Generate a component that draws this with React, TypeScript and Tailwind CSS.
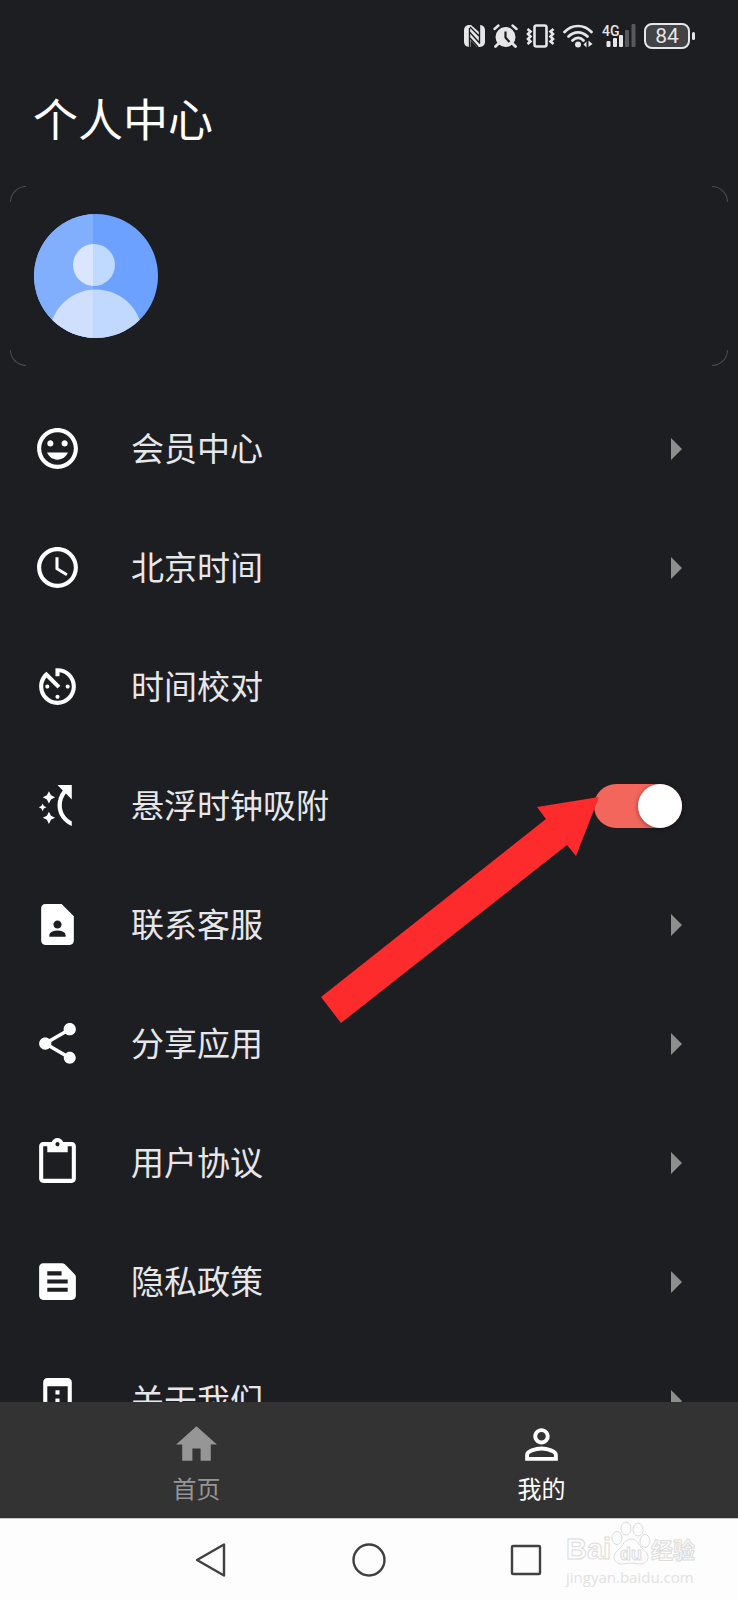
import React, { useState } from "react";
import type { IconType } from "react-icons";
import {
  MdAccessTime,
  MdAvTimer,
  MdContactPage,
  MdContentPaste,
  MdHome,
  MdInsertEmoticon,
  MdPermDeviceInformation,
  MdPersonOutline,
  MdShare,
  MdTextSnippet,
} from "react-icons/md";

const SnapIcon = ({ className }: { className?: string }) => (
  <svg viewBox="0 0 24 24" fill="currentColor" className={className}>
    <path d="M19 9V2h-7l2.600 2.600C12.900 6.700 12 9.200 12 12c0 4.500 2.800 8.300 7 10v-2.200c-3-1.600-4.900-4.500-4.900-7.800 0-2.300.7-4.200 2-5.900z" />
    <path d="M7.800 5l1 2 2 1-2 1-1 2-1-2-2-1 2-1z" />
    <path d="M7.800 15l1 2 2 1-2 1-1 2-1-2-2-1 2-1z" />
    <path d="M4.700 11l.6 1.300 1.300.6-1.300.6-.6 1.300-.6-1.300-1.300-.6 1.300-.6z" />
  </svg>
);

type MenuItem = {
  label: string;
  icon: IconType | typeof SnapIcon;
  trailing: "arrow" | "switch" | "none";
};

const menu: MenuItem[] = [
  { label: "会员中心", icon: MdInsertEmoticon, trailing: "arrow" },
  { label: "北京时间", icon: MdAccessTime, trailing: "arrow" },
  { label: "时间校对", icon: MdAvTimer, trailing: "none" },
  { label: "悬浮时钟吸附", icon: SnapIcon, trailing: "switch" },
  { label: "联系客服", icon: MdContactPage, trailing: "arrow" },
  { label: "分享应用", icon: MdShare, trailing: "arrow" },
  { label: "用户协议", icon: MdContentPaste, trailing: "arrow" },
  { label: "隐私政策", icon: MdTextSnippet, trailing: "arrow" },
  { label: "关于我们", icon: MdPermDeviceInformation, trailing: "arrow" },
];

const StatusBar = () => (
  <div className="flex h-[72px] shrink-0 items-center justify-end gap-2 pr-[43px] text-[#e6e6e8]">
    {/* NFC */}
    <svg viewBox="0 0 21 22" className="h-[22px] w-[21px]">
      <rect width="21" height="22" rx="5" fill="currentColor" />
      <path
        d="M5.500 3v19M15.500 0v18M6 2l9 9M6 7.500l10 11M6 13l8 9"
        stroke="#1d1e22"
        strokeWidth="1.400"
        fill="none"
      />
      <path d="M7 0h8v7z" fill="#1d1e22" />
      <path d="M6.500 15v7H13z" fill="#1d1e22" />
    </svg>
    {/* alarm */}
    <svg viewBox="0 0 25 24" className="h-6 w-[25px]" fill="none" stroke="currentColor">
      <circle cx="12.500" cy="13" r="10" fill="currentColor" stroke="none" />
      <path d="M1.500 5l4-3.500M23.500 5l-4-3.500" strokeWidth="2.400" strokeLinecap="round" />
      <path d="M5.500 19.500l-3 3M19.500 19.500l3 3" strokeWidth="2.800" strokeLinecap="round" />
      <path d="M12.500 7.500v6l4 4.500" stroke="#1d1e22" strokeWidth="2.200" />
    </svg>
    {/* vibrate */}
    <svg viewBox="0 0 29 24" className="h-6 w-[29px]" fill="none" stroke="currentColor">
      <rect x="8.500" y="1.500" width="12" height="21" rx="2" strokeWidth="2.600" />
      <path
        d="M1.500 5l3 2.500L2 10l2.500 2.500L2 15l2.500 2.500L1.500 20"
        strokeWidth="2.600"
      />
      <path
        d="M27.500 5l-3 2.500L27 10l-2.500 2.500L27 15l-2.500 2.500 3 2.500"
        strokeWidth="2.600"
      />
    </svg>
    {/* wifi */}
    <svg viewBox="0 0 30 24" className="h-6 w-[30px]" fill="none" stroke="currentColor">
      <path
        d="M1.500 8c7.500-8 19.500-8 27 0M5.500 12.500c5.500-5.600 13.500-5.600 19 0M9.500 16.500c3.500-3.500 8-3.500 11 0"
        strokeWidth="2.700"
        strokeLinecap="round"
      />
      <circle cx="15" cy="20.500" r="3" fill="currentColor" stroke="none" />
      <path d="M20.500 20.500l3-3v6zM29.500 20l-4-3.500v6.500z" fill="currentColor" stroke="none" />
    </svg>
    {/* signal */}
    <svg viewBox="0 0 34 24" className="ml-px h-6 w-[34px]" fill="currentColor">
      <text x="0" y="12" fontSize="14" fontWeight="500" fontFamily="Roboto, sans-serif">
        4G
      </text>
      <rect x="4.500" y="17" width="4" height="6" rx="1" />
      <rect x="11" y="14" width="4" height="9" rx="1" />
      <rect x="17" y="11" width="4" height="12" rx="1" />
      <rect x="23" y="6" width="4" height="17" rx="1" opacity=".3" />
      <rect x="29.500" y="0" width="4" height="23" rx="1" opacity=".3" />
    </svg>
    <div className="flex items-center gap-[2px]">
      <div className="flex h-[26px] w-[46px] items-center justify-center rounded-lg border-2 border-current bg-[#424347] font-['Roboto',sans-serif] text-[21px] leading-none">
        84
      </div>
      <span className="h-2 w-[3px] rounded-full bg-current" />
    </div>
  </div>
);

const Avatar = () => (
  <svg viewBox="0 0 124 124" className="size-[124px]">
    <defs>
      <clipPath id="disc">
        <circle cx="62" cy="62" r="62" />
      </clipPath>
      <clipPath id="left">
        <path d="M0 0h59v124H0z" />
      </clipPath>
    </defs>
    <g clipPath="url(#disc)">
      <path d="M0 0h124v124H0z" fill="#6da1ff" />
      <circle cx="60" cy="51" r="21" fill="#bfd9ff" />
      <circle cx="62" cy="122" r="46.500" fill="#c1d8ff" />
      <g clipPath="url(#left)">
        <path d="M0 0h59v124H0z" fill="#82affd" />
        <circle cx="60" cy="51" r="21" fill="#dae6ff" />
        <circle cx="62" cy="122" r="46.500" fill="#d0dffe" />
      </g>
    </g>
  </svg>
);

const ProfileCard = () => (
  <section className="relative mx-[10px] shrink-0 px-6 py-7">
    <span className="absolute left-0 top-0 size-4 rounded-tl-2xl border-l border-t border-[#4b4d50]" />
    <span className="absolute right-0 top-0 size-4 rounded-tr-2xl border-r border-t border-[#4b4d50]" />
    <span className="absolute bottom-0 left-0 size-4 rounded-bl-2xl border-b border-l border-[#4b4d50]" />
    <span className="absolute bottom-0 right-0 size-4 rounded-br-2xl border-b border-r border-[#4b4d50]" />
    <Avatar />
  </section>
);

const rowClass =
  "relative flex h-[119px] w-full items-center gap-[49px] pl-[33px] pr-[56px] text-left text-[33px] text-[#e7e7eb]";

const MenuRow = ({ item }: { item: MenuItem }) => {
  const [on, setOn] = useState(true);
  const Icon = item.icon;

  if (item.trailing === "switch") {
    return (
      <label className={rowClass}>
        <Icon className="size-[49px] shrink-0 text-white" />
        <span className="flex-1 pb-[2px]">{item.label}</span>
        <input
          type="checkbox"
          role="switch"
          checked={on}
          onChange={(e) => setOn(e.target.checked)}
          className="h-[44px] w-[88px] appearance-none rounded-full bg-[#55565a] before:block before:size-[44px] before:rounded-full before:bg-white before:shadow-[0_1px_5px_rgba(0,0,0,0.4)] checked:bg-[#f3665c] checked:before:ml-[44px]"
        />
        {/* pointer to the switch */}
        <svg
          viewBox="0 0 278 226"
          className="pointer-events-none absolute right-[139px] top-[51px] z-10 h-[226px] w-[278px]"
        >
          <path d="M278 0L216 10l9 12L0 200l20 26L246 48l9 11z" fill="#fe2b2d" />
        </svg>
      </label>
    );
  }

  return (
    <button type="button" className={rowClass}>
      <Icon className="size-[49px] shrink-0 text-white" />
      <span className="flex-1 pb-[2px]">{item.label}</span>
      {item.trailing === "arrow" && (
        <svg viewBox="0 0 11 22" className="h-[22px] w-[11px]" fill="#8e8e8e">
          <path d="M0 0l11 11L0 22z" />
        </svg>
      )}
    </button>
  );
};

const TabBar = () => (
  <nav className="grid shrink-0 grid-cols-2 border-b border-[#c9c9c9] bg-[#333333] px-6 pb-[11px] pt-[18px] text-2xl">
    <button type="button" className="flex flex-col items-center text-[#969696]">
      <MdHome className="size-[49px]" />
      <span className="leading-[38px]">首页</span>
    </button>
    <button type="button" className="flex flex-col items-center text-white">
      <MdPersonOutline className="size-[49px]" />
      <span className="leading-[38px]">我的</span>
    </button>
  </nav>
);

const Watermark = () => (
  <div className="absolute right-[40px] top-0 flex w-[132px] flex-col text-[#fdfdfd]">
    <div className="flex h-[46px] items-end font-['Liberation_Sans','Noto_Sans_CJK_SC',sans-serif] font-bold [-webkit-text-stroke:1px_#dcdcdc]">
      <span className="w-[45px] pb-[2px] text-[29px] leading-7">Bai</span>
      <svg viewBox="0 0 40 44" className="h-[44px] w-[40px] shrink-0" fill="#fdfdfd" stroke="#dcdcdc">
        <ellipse cx="6" cy="17" rx="5" ry="6.500" />
        <ellipse cx="15" cy="7.500" rx="5" ry="6.500" />
        <ellipse cx="27" cy="8.500" rx="5" ry="6.500" />
        <ellipse cx="34" cy="20" rx="5" ry="6.500" />
        <path d="M20 18c5 0 7 4 10 8s7 5 7 10-4 7-8 7c-3 0-5-1-9-1s-6 1-9 1c-5 0-8-3-8-7 0-5 4-6 7-10s5-8 10-8z" />
        <text x="9" y="39" fontSize="18">
          du
        </text>
      </svg>
      <span className="text-[22px] leading-7">经验</span>
    </div>
    <span className="mt-[2px] font-['Open_Sans',sans-serif] text-[15px] leading-5 text-[#e2e2e2]">
      jingyan.baidu.com
    </span>
  </div>
);

const SystemBar = () => (
  <div className="relative flex h-[81px] shrink-0 items-center justify-center bg-[#fdfdfd] text-[#404040]">
    <button type="button" aria-label="返回" className="flex w-[158px] justify-center">
      <svg viewBox="0 0 34 34" className="size-[34px]" fill="none" stroke="currentColor" strokeWidth="2.400" strokeLinejoin="round">
        <path d="M30 1.500v31L3 17z" />
      </svg>
    </button>
    <button type="button" aria-label="主屏幕" className="flex w-[158px] justify-center">
      <svg viewBox="0 0 34 34" className="size-[34px]" fill="none" stroke="currentColor" strokeWidth="2.400">
        <circle cx="17" cy="17" r="15.500" />
      </svg>
    </button>
    <button type="button" aria-label="最近任务" className="flex w-[158px] justify-center">
      <svg viewBox="0 0 34 34" className="size-[34px]" fill="none" stroke="currentColor" strokeWidth="2.400">
        <rect x="2" y="3" width="28" height="28" rx="1" />
      </svg>
    </button>
    <Watermark />
  </div>
);

const App = () => {
  return (
    <div className="flex h-screen flex-col bg-[#1d1e22] font-['Noto_Sans_CJK_SC',sans-serif]">
      <StatusBar />
      <h1 className="shrink-0 px-[33px] pb-5 pt-[14px] text-[45px] leading-[64px] text-white">
        个人中心
      </h1>
      <div className="mt-4 shrink-0">
        <ProfileCard />
      </div>
      <main className="mt-[23px] min-h-0 flex-1 overflow-y-auto [scrollbar-width:none]">
        <ul>
          {menu.map((item) => (
            <li key={item.label}>
              <MenuRow item={item} />
            </li>
          ))}
        </ul>
      </main>
      <TabBar />
      <SystemBar />
    </div>
  );
};

export default App;
